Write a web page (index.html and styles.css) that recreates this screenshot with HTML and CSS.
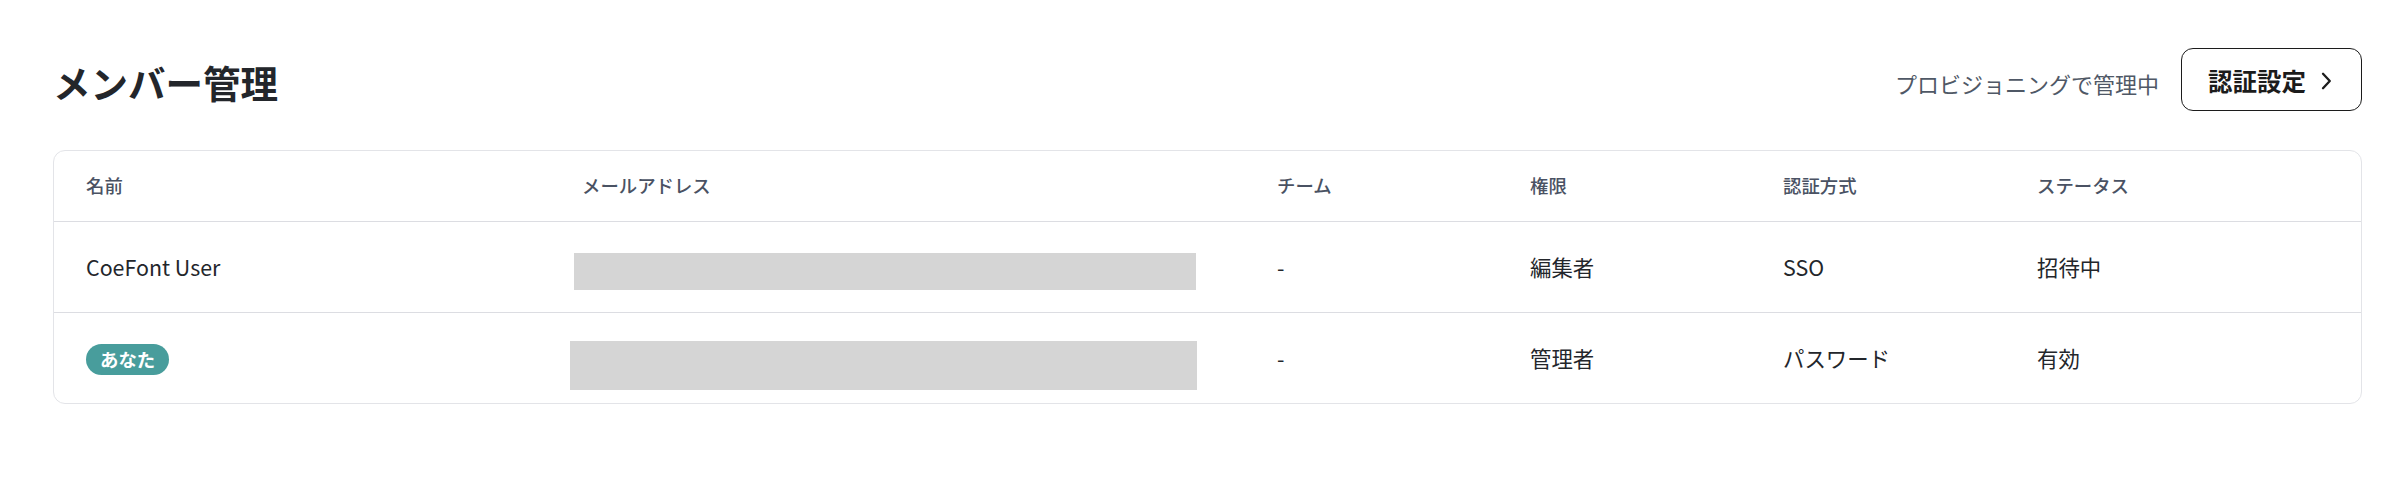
FILE: index.html
```html
<!DOCTYPE html>
<html lang="ja">
<head>
<meta charset="utf-8">
<title>メンバー管理</title>
<link rel="stylesheet" href="styles.css">
</head>
<body>
<div class="page">
  <header class="topbar">
    <h1 class="title">メンバー管理</h1>
    <div class="actions">
      <span class="note">プロビジョニングで管理中</span>
      <button class="auth-btn" type="button">
        <span class="btn-label">認証設定</span>
        <svg class="chev" width="24" height="24" viewBox="0 0 24 24" fill="none" stroke="currentColor" stroke-width="2.3" stroke-linecap="round" stroke-linejoin="round"><path d="M9 4.8l6.8 7.2-6.8 7.2"/></svg>
      </button>
    </div>
  </header>

  <div class="card">
    <div class="row head">
      <div class="cell">名前</div>
      <div class="cell">メールアドレス</div>
      <div class="cell">チーム</div>
      <div class="cell">権限</div>
      <div class="cell">認証方式</div>
      <div class="cell">ステータス</div>
    </div>
    <div class="row">
      <div class="cell">CoeFont User</div>
      <div class="cell"><div class="redact r1"></div></div>
      <div class="cell">-</div>
      <div class="cell">編集者</div>
      <div class="cell">SSO</div>
      <div class="cell">招待中</div>
    </div>
    <div class="row last">
      <div class="cell"><span class="badge">あなた</span></div>
      <div class="cell"><div class="redact r2"></div></div>
      <div class="cell">-</div>
      <div class="cell">管理者</div>
      <div class="cell">パスワード</div>
      <div class="cell">有効</div>
    </div>
  </div>
</div>
</body>
</html>
```

FILE: styles.css
```css
* { box-sizing: border-box; }
html, body {
  margin: 0;
  padding: 0;
  background: #ffffff;
}
body {
  font-family: "Noto Sans CJK JP", "Noto Sans", sans-serif;
  color: #1f2328;
}
.page {
  padding: 48px 36px 0 53px;
}
.topbar {
  display: flex;
  align-items: center;
  justify-content: space-between;
  height: 63px;
}
.title {
  margin: 0;
  font-size: 37.5px;
  font-weight: 700;
  line-height: 1;
  color: #23262b;
  position: relative;
  top: 2px;
}
.actions {
  display: flex;
  align-items: center;
  gap: 22px;
}
.note {
  font-size: 22px;
  color: #4f5866;
  line-height: 1;
  position: relative;
  top: 3px;
}
.auth-btn {
  display: flex;
  align-items: center;
  gap: 8px;
  height: 63px;
  padding: 0 23px 0 26px;
  border: 1.5px solid #1c1c1c;
  border-radius: 12px;
  background: #ffffff;
  font-family: "Noto Sans CJK JP", "Noto Sans", sans-serif;
  font-size: 24.5px;
  font-weight: 700;
  color: #1c1c1c;
  line-height: 1;
}
.btn-label {
  position: relative;
  top: 2px;
}
.chev { display: block; position: relative; top: 1px; }
.card {
  margin-top: 39px;
  border: 1px solid #e3e4e8;
  border-radius: 12px;
  overflow: hidden;
}
.row {
  display: grid;
  grid-template-columns: 496px 695px 253px 253px 254px 1fr;
  align-items: center;
  height: 91px;
  border-bottom: 1px solid #dcdde2;
}
.row.head {
  height: 71px;
}
.row.last {
  height: 90px;
  border-bottom: none;
}
.cell {
  padding-left: 32px;
  font-size: 21.4px;
  line-height: 1.4;
  color: #23262b;
  white-space: nowrap;
}
.head .cell {
  font-size: 18.4px;
  font-weight: 500;
  color: #4a5263;
}
.redact {
  background: #d5d5d5;
}
.r1 {
  width: 622px;
  height: 37px;
  margin-left: -8px;
  margin-top: 8px;
}
.r2 {
  width: 627px;
  height: 49px;
  margin-left: -12px;
  margin-top: 14px;
}
.badge {
  display: inline-block;
  padding: 0 14px;
  height: 31px;
  line-height: 31px;
  border-radius: 16px;
  background: #489d9c;
  color: #ffffff;
  font-size: 18.4px;
  font-weight: 700;
  vertical-align: middle;
}
```
